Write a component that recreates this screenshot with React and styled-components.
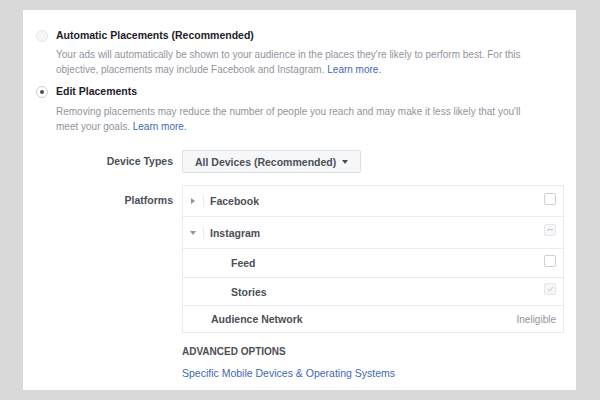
import styled, { createGlobalStyle } from 'styled-components';

const GlobalStyle = createGlobalStyle`
  body {
    margin: 0;
    background: #d9d9d9;
    font-family: "Liberation Sans", Arial, sans-serif;
    -webkit-font-smoothing: antialiased;
  }
`;

const Page = styled.div`
  width: 600px;
  height: 400px;
  padding: 10px 24px 10px 23px;
  box-sizing: border-box;
`;

const Panel = styled.section`
  height: 380px;
  background: #fff;
  padding: 18px 0 0 13px;
  box-sizing: border-box;
`;

const Option = styled.div`
  display: grid;
  grid-template-columns: 12px 1fr;
  column-gap: 8px;
  align-items: center;
  margin-top: ${({ first }) => (first ? '0' : '7px')};
`;

const Radio = styled.span`
  width: 12px;
  height: 12px;
  box-sizing: border-box;
  border-radius: 50%;
  border: 1px solid ${({ checked }) => (checked ? '#ccd0d5' : '#e4e6e9')};
  background: ${({ checked }) => (checked ? '#fff' : '#f5f6f7')};
  display: flex;
  align-items: center;
  justify-content: center;

  &::after {
    content: '';
    display: ${({ checked }) => (checked ? 'block' : 'none')};
    width: 4px;
    height: 4px;
    border-radius: 50%;
    background: #4b4f56;
  }
`;

const Title = styled.div`
  font-size: 10.5px;
  line-height: 15px;
  font-weight: 700;
  color: #1d2129;
`;

const Desc = styled.p`
  grid-column: 2;
  margin: ${({ tight }) => (tight ? '5px' : '4px')} 0 0;
  width: ${({ w }) => w}px;
  font-size: 10px;
  line-height: 15px;
  color: #90949c;
`;

const Link = styled.a`
  color: #4267b2;
  text-decoration: none;
`;

const Form = styled.div`
  display: grid;
  grid-template-columns: 137px 382px;
  column-gap: 9px;
  row-gap: 12px;
  margin-top: 16px;
`;

const Label = styled.div`
  text-align: right;
  font-size: 10.5px;
  font-weight: 700;
  color: #4b4f56;
  line-height: ${({ rowHeight }) => rowHeight}px;
`;

const Dropdown = styled.button`
  justify-self: start;
  height: 23px;
  padding: 0 12px;
  display: flex;
  align-items: center;
  gap: 6px;
  background: #f6f7f9;
  border: 1px solid #dddfe2;
  border-radius: 2px;
  font-family: inherit;
  font-size: 10.5px;
  font-weight: 700;
  color: #4b4f56;
`;

const Caret = styled.span`
  width: 0;
  height: 0;
  border-left: 3.5px solid transparent;
  border-right: 3.5px solid transparent;
  border-top: 4px solid #4b4f56;
  margin-top: 1px;
`;

const Table = styled.div`
  border: 1px solid #e9ebee;
`;

const Row = styled.div`
  height: ${({ h }) => h}px;
  display: flex;
  align-items: center;
  padding-right: 7px;
  border-top: ${({ first }) => (first ? 'none' : '1px solid #e9ebee')};
  box-sizing: border-box;
`;

const Toggle = styled.span`
  width: 20px;
  display: flex;
  justify-content: center;
`;

const Arrow = styled.span`
  width: 0;
  height: 0;
  ${({ open }) =>
    open
      ? `border-left: 3.5px solid transparent;
         border-right: 3.5px solid transparent;
         border-top: 4px solid #90949c;`
      : `border-top: 3.5px solid transparent;
         border-bottom: 3.5px solid transparent;
         border-left: 4px solid #90949c;`}
`;

const Divider = styled.span`
  width: 1px;
  height: 12px;
  background: #e9ebee;
  margin-right: 6px;
`;

const Name = styled.span`
  flex: 1;
  padding-left: ${({ indent }) => indent}px;
  font-size: 10.5px;
  font-weight: 700;
  color: #4b4f56;
`;

const Check = styled.span`
  width: 12px;
  height: 12px;
  box-sizing: border-box;
  border-radius: 2px;
  border: 1px solid ${({ disabled }) => (disabled ? '#e4e6e9' : '#ccd0d5')};
  background: ${({ disabled }) => (disabled ? '#f5f6f7' : '#fff')};
  margin-top: -5px;
  display: flex;
  align-items: center;
  justify-content: center;
`;

const Note = styled.span`
  font-size: 10px;
  color: #90949c;
`;

const Advanced = styled.div`
  grid-column: 2;
`;

const AdvancedTitle = styled.div`
  font-size: 10px;
  font-weight: 700;
  color: #4b4f56;
  text-transform: uppercase;
  line-height: 14px;
`;

const AdvancedLink = styled(Link)`
  display: block;
  margin-top: 7px;
  font-size: 10.5px;
  line-height: 14px;
`;

const Dash = () => (
  <svg width="6" height="2" viewBox="0 0 6 2">
    <rect width="6" height="1.2" fill="#ccd0d5" />
  </svg>
);

const Tick = () => (
  <svg width="7" height="6" viewBox="0 0 7 6">
    <path d="M1 3.2 2.8 5 6 1" fill="none" stroke="#ccd0d5" strokeWidth="1.1" />
  </svg>
);

const App = () => (
  <Page>
    <GlobalStyle />
    <Panel>
      <Option first>
        <Radio />
        <Title>Automatic Placements (Recommended)</Title>
        <Desc w={494}>
          Your ads will automatically be shown to your audience in the places they're likely to
          perform best. For this objective, placements may include Facebook and Instagram.{' '}
          <Link href="#">Learn more.</Link>
        </Desc>
      </Option>
      <Option>
        <Radio checked />
        <Title>Edit Placements</Title>
        <Desc tight w={482}>
          Removing placements may reduce the number of people you reach and may make it less likely
          that you'll meet your goals. <Link href="#">Learn more.</Link>
        </Desc>
      </Option>

      <Form>
        <Label rowHeight={23}>Device Types</Label>
        <Dropdown>
          All Devices (Recommended)
          <Caret />
        </Dropdown>

        <Label rowHeight={30}>Platforms</Label>
        <Table>
          <Row first h={30}>
            <Toggle>
              <Arrow />
            </Toggle>
            <Divider />
            <Name>Facebook</Name>
            <Check />
          </Row>
          <Row h={32}>
            <Toggle>
              <Arrow open />
            </Toggle>
            <Divider />
            <Name>Instagram</Name>
            <Check disabled>
              <Dash />
            </Check>
          </Row>
          <Row h={29}>
            <Name indent={48}>Feed</Name>
            <Check />
          </Row>
          <Row h={28}>
            <Name indent={48}>Stories</Name>
            <Check disabled>
              <Tick />
            </Check>
          </Row>
          <Row h={27}>
            <Name indent={28}>Audience Network</Name>
            <Note>Ineligible</Note>
          </Row>
        </Table>

        <Advanced>
          <AdvancedTitle>Advanced Options</AdvancedTitle>
          <AdvancedLink href="#">Specific Mobile Devices &amp; Operating Systems</AdvancedLink>
        </Advanced>
      </Form>
    </Panel>
  </Page>
);

export default App;
